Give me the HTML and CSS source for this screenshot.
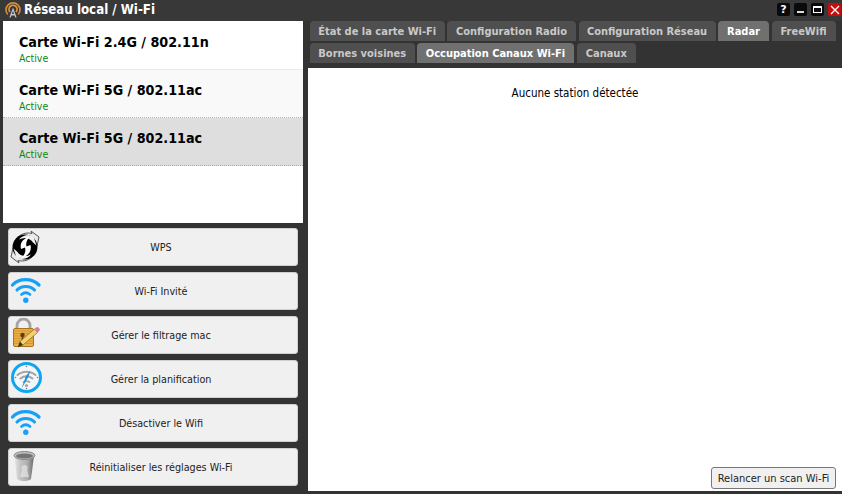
FILE: index.html
```html
<!DOCTYPE html>
<html lang="fr">
<head>
<meta charset="utf-8">
<title>Réseau local / Wi-Fi</title>
<link rel="stylesheet" href="styles.css">
</head>
<body>
<div class="window">
  <header class="titlebar">
    <svg class="app-icon" viewBox="0 0 16 18" width="16" height="18">
      <g fill="none" stroke-width="1.700">
        <path d="M2.800 13.500a7 7 0 1 1 10.400 0" stroke="#d98a35"/>
        <path d="M5 11a4 4 0 1 1 6 0" stroke="#e09a45"/>
      </g>
      <path d="M8 6.500l3.600 10h-1.300l-.7-2H6.400l-.7 2H4.400z M7 13h2L8 9.800z" fill="#c8c8c8" fill-rule="evenodd"/>
    </svg>
    <span class="title">Réseau local / Wi-Fi</span>
    <div class="win-buttons">
      <span class="win-btn">?</span>
      <span class="win-btn"><i class="min"></i></span>
      <span class="win-btn"><i class="max"></i></span>
      <span class="win-btn close">
        <svg viewBox="0 0 10 10" width="10" height="10"><path d="M1 1l8 8M9 1l-8 8" stroke="#fff" stroke-width="1.300"/></svg>
      </span>
    </div>
  </header>
  <div class="main">
    <aside class="sidebar">
      <ul class="cards">
        <li class="card"><strong>Carte Wi-Fi 2.4G / 802.11n</strong><span>Active</span></li>
        <li class="card alt"><strong>Carte Wi-Fi 5G / 802.11ac</strong><span>Active</span></li>
        <li class="card selected"><strong>Carte Wi-Fi 5G / 802.11ac</strong><span>Active</span></li>
      </ul>
      <div class="actions">
        <button class="action">
          <svg class="ico" viewBox="0 0 34 34" width="34" height="34">
            <path d="M7 9C11 4 17 2 23 3.500L22 1l8 6-2 9-2.500-3.500" fill="#e8e8e8" stroke="#555"/>
            <path d="M25 25C21 30 15 32 9 30.500L10 33l-8-6 2-9 2.500 3.500" fill="#e8e8e8" stroke="#555"/>
            <circle cx="16" cy="17" r="12.500" fill="#000"/>
            <path d="M24.500 6.500L27.500 15.500 24 12.500C22 9.500 19 8 16 8 14 8 12 8.500 10 9.500 12 6.500 16 5 19.500 5z" fill="#f0f0f0"/>
            <path d="M7.500 27.500L4.500 18.500 8 21.500C10 24.500 13 26 16 26c2 0 4-.5 6-1.500-2 3-6 4.500-9.500 4.500z" fill="#f0f0f0"/>
            <path d="M21 6.500C14 8.500 10.500 13 12 19l4-1.500c1 3.500 0 7-3.500 10.500 7-2.500 10.500-7 9-13l-4 1.500C16.500 13 18 9.500 21 6.500z" fill="#fff"/>
          </svg>
          <span>WPS</span>
        </button>
        <button class="action">
          <svg class="ico" viewBox="0 0 34 34" width="34" height="34">
            <g fill="none" stroke="#16a0f7" stroke-linecap="round">
              <path d="M3.500 11C10 3.800 23 3.800 30 11" stroke-width="3.300"/>
              <path d="M8 16C12.500 11.300 21 11.300 25.500 16" stroke-width="3.100"/>
              <path d="M12.500 20.500C15 18.500 18.500 18.500 21 20.500" stroke-width="2.800"/>
            </g>
            <circle cx="16.800" cy="26.200" r="2.700" fill="#16a0f7"/>
          </svg>
          <span>Wi-Fi Invité</span>
        </button>
        <button class="action">
          <svg class="ico" viewBox="0 0 34 34" width="34" height="34">
            <path d="M8 11V7.500a6.500 6.500 0 0 1 13 0V11" fill="none" stroke="#a4a4a4" stroke-width="2.800"/>
            <rect x="4.500" y="10.500" width="20" height="18" rx="1.500" fill="#eab044" stroke="#a87420"/>
            <path d="M5 13h19M5 15.500h19M5 18h19M5 20.500h19M5 23h19M5 25.500h19" stroke="#c98e2c" stroke-width=".7"/>
            <circle cx="13.500" cy="17" r="2.200" fill="#5a3c14"/>
            <rect x="12.700" y="17" width="1.600" height="6" fill="#5a3c14"/>
            <path d="M9 29l2-5.500 14.500-12.500 3 3.500L14 27z" fill="#f5d070" stroke="#8a6a20" stroke-width=".7"/>
            <path d="M9 29l2-5.500 3 3.500z" fill="#3a3020"/>
            <path d="M25.500 11l2-1.700a1.500 1.500 0 0 1 2 .2l1 1.200a1.500 1.500 0 0 1-.1 2l-1.900 1.800z" fill="#d87aa8"/>
          </svg>
          <span>Gérer le filtrage mac</span>
        </button>
        <button class="action">
          <svg class="ico" viewBox="0 0 34 34" width="34" height="34">
            <circle cx="17.500" cy="15.500" r="14" fill="#f4f7f9" stroke="#10a6ef" stroke-width="3"/>
            <g fill="none" stroke="#a4a4a4" stroke-linecap="round">
              <path d="M8.500 13C13.500 8.500 21.500 8.500 26.500 13" stroke-width="2"/>
              <path d="M11.500 16.500C15 13.500 20 13.500 23.500 16.500" stroke-width="2"/>
              <path d="M14.500 20C16 19 19 19 20.500 20" stroke-width="1.800"/>
            </g>
            <circle cx="17.500" cy="23.500" r="1.600" fill="#a4a4a4"/>
            <g fill="#777"><circle cx="17.500" cy="4.500" r=".8"/><circle cx="28.500" cy="15.500" r=".8"/><circle cx="6.500" cy="15.500" r=".8"/><circle cx="17.500" cy="26.500" r=".8"/></g>
            <path d="M12.500 26.500L17 14l4.500-5.500-2.500 7z" fill="#1590e0"/>
          </svg>
          <span>Gérer la planification</span>
        </button>
        <button class="action">
          <svg class="ico" viewBox="0 0 34 34" width="34" height="34">
            <g fill="none" stroke="#16a0f7" stroke-linecap="round">
              <path d="M3.500 11C10 3.800 23 3.800 30 11" stroke-width="3.300"/>
              <path d="M8 16C12.500 11.300 21 11.300 25.500 16" stroke-width="3.100"/>
              <path d="M12.500 20.500C15 18.500 18.500 18.500 21 20.500" stroke-width="2.800"/>
            </g>
            <circle cx="16.800" cy="26.200" r="2.700" fill="#16a0f7"/>
          </svg>
          <span>Désactiver le Wifi</span>
        </button>
        <button class="action">
          <svg class="ico" viewBox="0 0 34 34" width="34" height="34">
            <defs>
              <linearGradient id="bin" x1="0" x2="1" y1="0" y2="0">
                <stop offset="0" stop-color="#e6e6e6"/>
                <stop offset=".3" stop-color="#c4c4c4"/>
                <stop offset=".65" stop-color="#b0b0b0"/>
                <stop offset="1" stop-color="#6a6a6a"/>
              </linearGradient>
            </defs>
            <path d="M5.500 6l2.500 23c3 2.800 11 2.800 14 0l3-23z" fill="url(#bin)"/>
            <ellipse cx="15.500" cy="5.500" rx="10.500" ry="4" fill="#c0c0c0" stroke="#888"/>
            <ellipse cx="15.500" cy="6" rx="8.500" ry="2.600" fill="#747474"/>
            <path d="M15.500 15c-3 0-3.500 3-2.500 5l-2 7h9l-2-7c1-2 .5-5-2.500-5z" fill="#e6e6e6" opacity=".7"/>
          </svg>
          <span>Réinitialiser les réglages Wi-Fi</span>
        </button>
      </div>
    </aside>
    <section class="content">
      <nav class="tabs">
        <div class="tab-row">
          <a class="tab w1">État de la carte Wi-Fi</a>
          <a class="tab w2">Configuration Radio</a>
          <a class="tab w3">Configuration Réseau</a>
          <a class="tab w4 active">Radar</a>
          <a class="tab w5">FreeWifi</a>
        </div>
        <div class="tab-row">
          <a class="tab w6">Bornes voisines</a>
          <a class="tab w7 active">Occupation Canaux Wi-Fi</a>
          <a class="tab w8">Canaux</a>
        </div>
      </nav>
      <div class="panel">
        <p class="empty">Aucune station détectée</p>
        <div class="panel-foot"><button class="scan">Relancer un scan Wi-Fi</button></div>
      </div>
    </section>
  </div>
</div>
</body>
</html>
```
FILE: styles.css
```css
* { box-sizing: border-box; }
html, body { margin: 0; height: 100%; }
body {
  background: #333;
  font-family: "DejaVu Sans Condensed", "DejaVu Sans", sans-serif;
  font-size: 11px;
  overflow: hidden;
}
.window { width: 842px; height: 494px; display: flex; flex-direction: column; background: #333; }
.titlebar {
  height: 21px;
  flex: none;
  display: flex;
  align-items: center;
  padding: 0 1px 3px 5px;
  background: #383838;
}
.app-icon { flex: none; margin-top: 2px; }
.title {
  margin-left: 3px;
  color: #fff;
  font-size: 13.200px;
  font-weight: bold;
}
.win-buttons { margin-left: auto; display: flex; gap: 4px; margin-top: 1px; }
.win-btn {
  width: 13px;
  height: 13px;
  border-radius: 2px;
  background: #0a0a0a;
  color: #fff;
  font: bold 11px/13px "DejaVu Sans", sans-serif;
  display: flex;
  align-items: center;
  justify-content: center;
}
.win-btn .min { width: 7px; height: 2px; background: #ddd; margin-top: 4px; }
.win-btn .max { width: 9px; height: 7px; border: 1px solid #fff; border-top-width: 2px; }
.win-btn.close { background: #c40d0d; }
.main { flex: 1; display: flex; min-height: 0; padding-left: 3px; }
.sidebar { width: 300px; flex: none; display: flex; flex-direction: column; }
.cards { margin: 0; padding: 1px 0 0; list-style: none; height: 202px; flex: none; background: #fff; }
.card {
  height: 48px;
  padding: 11px 0 0 16px;
  display: flex;
  flex-direction: column;
  background: #fff;
  border-bottom: 1px solid #eaeaea;
}
.card strong {
  font-size: 14.200px;
  line-height: 18px;
  color: #000;
}
.card span { color: #0a8a0a; font-size: 10.500px; line-height: 14px; }
.card.alt { background: #f9f9f9; border-bottom: 1px dotted #a9b3cc; }
.card.selected { background: #dedede; border-bottom: 1px dotted #aaa; }
.actions { padding: 5px 5px 0; display: flex; flex-direction: column; gap: 6px; }
.action {
  position: relative;
  height: 38px;
  padding: 0 0 0 16px;
  border: 1px solid #cfcfcf;
  border-radius: 3px;
  background: #f0f0f0;
  color: #222;
  font: inherit;
  font-size: 10.700px;
  display: flex;
  align-items: center;
  justify-content: center;
}
.ico { position: absolute; left: 0; top: 1px; }
.content { flex: 1; min-width: 0; padding-left: 5px; display: flex; flex-direction: column; }
.tabs { height: 47px; flex: none; padding-left: 2px; display: flex; flex-direction: column; gap: 2px; }
.tab-row { display: flex; gap: 2.500px; height: 20px; }
.tab {
  display: flex;
  align-items: center;
  justify-content: center;
  padding-top: 1px;
  background: #4f4f4f;
  color: #c9c9c9;
  font-weight: bold;
  font-size: 11px;
  border-radius: 4px 4px 0 0;
}
.tab.active { background: #707070; color: #fff; }
.w1 { width: 134.500px; } .w2 { width: 129px; } .w3 { width: 137px; } .w4 { width: 51px; } .w5 { width: 64px; }
.w6 { width: 104.500px; } .w7 { width: 157px; } .w8 { width: 59.500px; }
.panel { height: 423px; background: #fff; display: flex; flex-direction: column; }
.empty { margin: 18px 0 0; text-align: center; color: #000; font-size: 11.500px; line-height: 14px; }
.panel-foot { margin-top: auto; padding: 0 6px 2px 0; display: flex; justify-content: flex-end; }
.scan {
  width: 125px;
  height: 22px;
  padding: 0;
  border: 1px solid #777;
  border-radius: 3px;
  background: #f0f0f0;
  color: #222;
  font: inherit;
}
```
